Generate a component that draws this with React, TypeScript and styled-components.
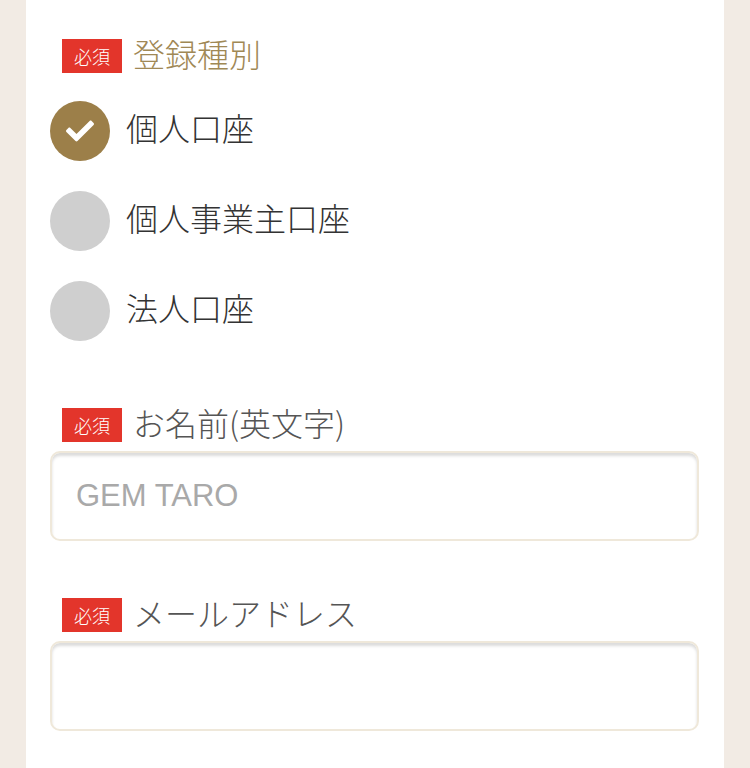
import React, { useState } from 'react';
import styled, { createGlobalStyle } from 'styled-components';
import { FaCheck } from 'react-icons/fa';

const GlobalStyle = createGlobalStyle`
  html, body {
    margin: 0;
    padding: 0;
    background: #f2ebe4;
  }
  body {
    font-family: "Noto Sans CJK JP", "Noto Sans", sans-serif;
  }
`;

const Page = styled.div`
  min-height: 768px;
  padding: 0 26px;
  background: #f2ebe4;
`;

const Card = styled.div`
  min-height: 768px;
  background: #ffffff;
  padding: 39px 25px 0 24px;
  box-sizing: border-box;
`;

const Section = styled.section<{ gapTop: number }>`
  margin-top: ${({ gapTop }) => gapTop}px;
  &:first-child {
    margin-top: 0;
  }
`;

const LabelRow = styled.div`
  display: flex;
  align-items: center;
  gap: 11px;
  height: 34px;
  padding-left: 12px;
`;

const Required = styled.span`
  display: inline-flex;
  align-items: center;
  justify-content: center;
  width: 60px;
  height: 34px;
  background: #e3352b;
  color: #ffffff;
  font-size: 18px;
  font-weight: 300;
  line-height: 1;
`;

const LabelText = styled.span<{ accent?: boolean }>`
  font-size: 32px;
  font-weight: 300;
  line-height: 1;
  padding-bottom: 6px;
  color: ${({ accent }) => (accent ? '#a08855' : '#555555')};
`;

const RadioList = styled.div`
  display: flex;
  flex-direction: column;
  gap: 30px;
  margin-top: 28px;
`;

const RadioRow = styled.label`
  display: flex;
  align-items: center;
  gap: 16px;
  height: 60px;
  cursor: pointer;
`;

const RadioDot = styled.span<{ checked: boolean }>`
  display: inline-flex;
  align-items: center;
  justify-content: center;
  flex: none;
  width: 60px;
  height: 60px;
  border-radius: 50%;
  background: ${({ checked }) => (checked ? '#9c7f49' : '#cfcfcf')};
  color: #ffffff;
`;

const RadioText = styled.span`
  font-size: 32px;
  font-weight: 300;
  line-height: 1;
  padding-bottom: 8px;
  color: #333333;
`;

const TextInput = styled.input`
  display: block;
  width: 100%;
  height: 90px;
  margin-top: 9px;
  box-sizing: border-box;
  border: 2px solid #efe8da;
  border-radius: 10px;
  box-shadow: inset 0 3px 3px rgba(0, 0, 0, 0.14);
  padding: 0 24px;
  font-family: "Liberation Sans", Arial, sans-serif;
  font-size: 31px;
  color: #333333;
  background: #ffffff;
  outline: none;
  &::placeholder {
    color: #a9a9a9;
  }
`;

const types = ['個人口座', '個人事業主口座', '法人口座'];

export default function App() {
  const [selected, setSelected] = useState(0);
  return (
    <Page>
      <GlobalStyle />
      <Card>
        <Section gapTop={0}>
          <LabelRow>
            <Required>必須</Required>
            <LabelText accent>登録種別</LabelText>
          </LabelRow>
          <RadioList>
            {types.map((t, i) => (
              <RadioRow key={t} onClick={() => setSelected(i)}>
                <RadioDot checked={selected === i}>
                  {selected === i && <FaCheck size={28} />}
                </RadioDot>
                <RadioText>{t}</RadioText>
              </RadioRow>
            ))}
          </RadioList>
        </Section>
        <Section gapTop={67}>
          <LabelRow>
            <Required>必須</Required>
            <LabelText>お名前(英文字)</LabelText>
          </LabelRow>
          <TextInput placeholder="GEM TARO" />
        </Section>
        <Section gapTop={57}>
          <LabelRow>
            <Required>必須</Required>
            <LabelText>メールアドレス</LabelText>
          </LabelRow>
          <TextInput />
        </Section>
      </Card>
    </Page>
  );
}
